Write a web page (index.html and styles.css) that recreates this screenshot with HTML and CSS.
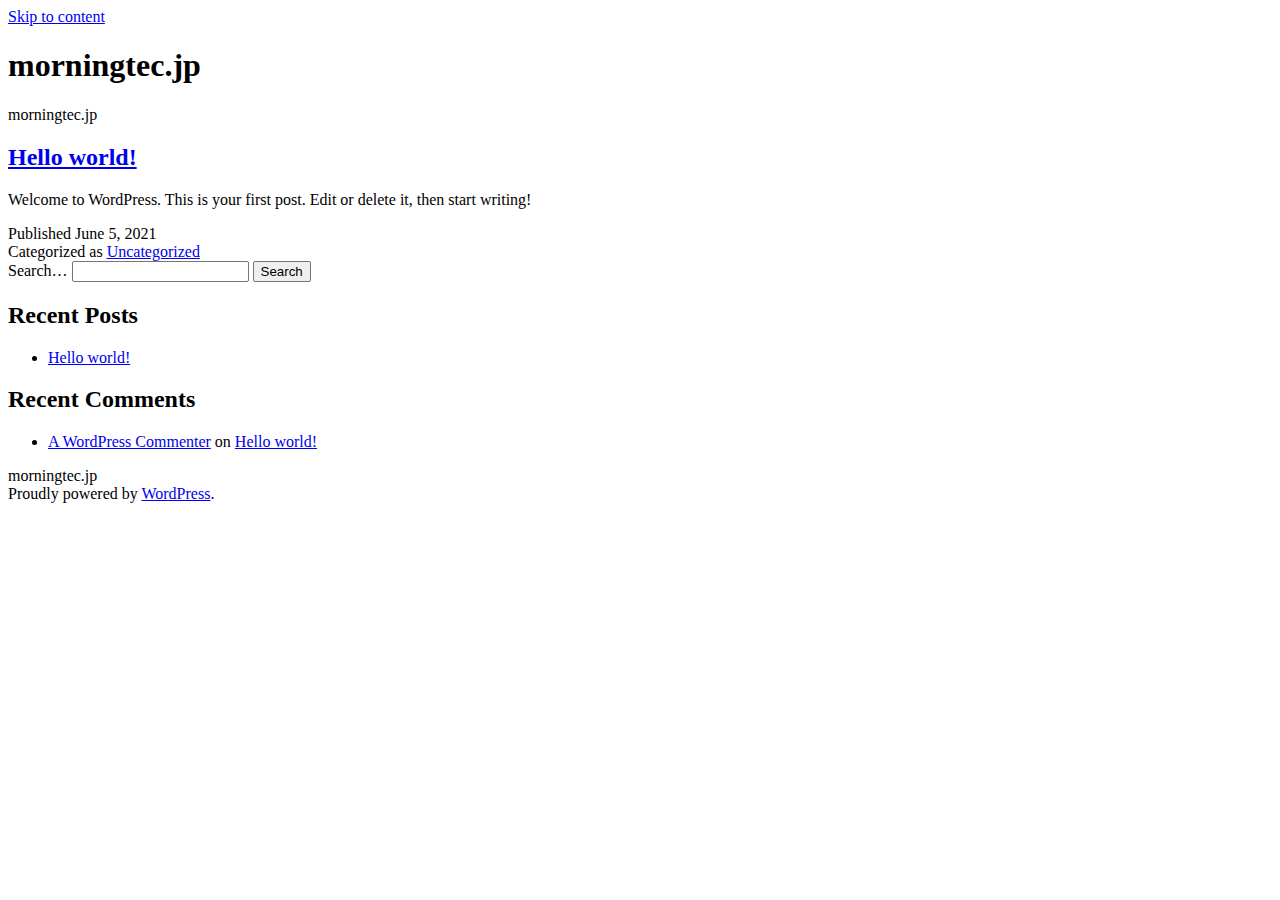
FILE: index.html
```html
<!DOCTYPE html>
<html lang="en">
<head>
    <meta charset="UTF-8">
    <meta name="viewport" content="width=device-width, initial-scale=1.0">
    <title>morningtec.jp</title>
    <link rel="stylesheet" href="styles.css">
</head>
<body>
    <a class="skip-link" href="#content">Skip to content</a>

    <header class="site-header">
        <h1 class="site-title">morningtec.jp</h1>
        <p class="site-description">morningtec.jp</p>
    </header>

    <main id="content">
        <article class="post">
            <h2 class="entry-title"><a href="#">Hello world!</a></h2>
            <div class="entry-content">
                <p>Welcome to WordPress. This is your first post. Edit or delete it, then start writing!</p>
            </div>
            <footer class="entry-footer">
                <div class="posted-on">Published June 5, 2021</div>
                <div class="cat-links">Categorized as <a href="#">Uncategorized</a></div>
            </footer>
        </article>
    </main>

    <aside class="widget-area">
        <form class="search-form">
            <label for="s">Search…</label>
            <input type="search" id="s" class="search-field">
            <button type="submit" class="search-submit">Search</button>
        </form>

        <section class="widget">
            <h2>Recent Posts</h2>
            <ul>
                <li><a href="#">Hello world!</a></li>
            </ul>
        </section>

        <section class="widget">
            <h2>Recent Comments</h2>
            <ul>
                <li><a href="#">A WordPress Commenter</a> on <a href="#">Hello world!</a></li>
            </ul>
        </section>
    </aside>

    <footer class="site-footer">
        <div>morningtec.jp</div>
        <div>Proudly powered by <a href="#">WordPress</a>.</div>
    </footer>
</body>
</html>
```

FILE: styles.css
```css
body {
    font-family: "Liberation Serif", "Times New Roman", serif;
    font-size: 16px;
    color: #000;
    background: #fff;
}
a {
    color: #0000ee;
}
.search-form {
    margin: 0;
}
.search-form label {
    vertical-align: -1px;
}
.search-field {
    width: 177px;
    height: 21px;
    box-sizing: border-box;
    border: 1px solid #767676;
    border-radius: 2px;
    padding: 1px 2px;
    font-family: "Liberation Sans", Arial, sans-serif;
    font-size: 13.33px;
    vertical-align: middle;
    margin: 0;
}
.search-submit {
    font-family: "Liberation Sans", Arial, sans-serif;
    font-size: 13.33px;
    height: 21px;
    padding: 1px 7px;
    border: 1px solid #767676;
    border-radius: 2px;
    background: #efefef;
    color: #000;
    vertical-align: middle;
    margin: 0;
}
```
